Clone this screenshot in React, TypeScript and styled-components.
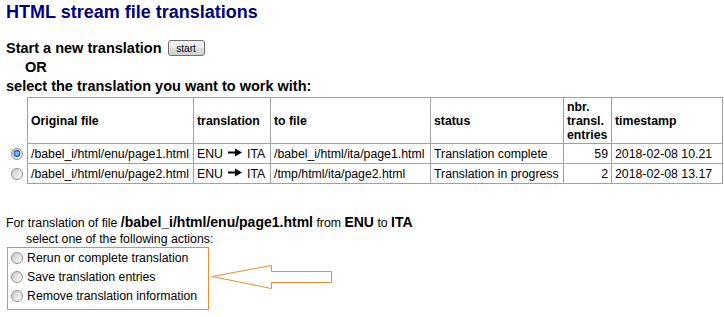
import styled, { createGlobalStyle } from 'styled-components'

const GlobalStyle = createGlobalStyle`
  * {
    box-sizing: border-box;
  }
  body {
    margin: 0;
    background: #ffffff;
    color: #000000;
    font-family: 'Liberation Sans', Arial, sans-serif;
  }
`

const Page = styled.div`
  padding: 1px 0 8px 6px;
  width: 724px;
`

const Title = styled.h1`
  margin: 0;
  font-size: 18px;
  line-height: 22px;
  font-weight: bold;
  color: #000080;
`

const Intro = styled.div`
  margin-top: 16px;
  font-size: 14.5px;
  line-height: 19px;
  font-weight: bold;
`

const Line = styled.div<{ indent?: number }>`
  padding-left: ${({ indent }) => indent || 0}px;
  white-space: nowrap;
`

const StartButton = styled.button`
  display: inline-block;
  vertical-align: text-top;
  width: 37px;
  height: 16px;
  margin-left: 2px;
  padding: 0;
  font-family: 'Liberation Sans', Arial, sans-serif;
  font-size: 10px;
  line-height: 13px;
  color: #000;
  border: 1px solid #707070;
  border-radius: 3px;
  background: linear-gradient(#f2f2f2 0%, #ebebeb 50%, #dddddd 51%, #cfcfcf 100%);
`

const Table = styled.table`
  margin-top: 1px;
  border-collapse: separate;
  border-spacing: 0;
  table-layout: fixed;
  width: 716px;
  font-size: 12.3px;
  line-height: 14px;
`

const Cell = styled.td<{ first?: boolean; align?: string }>`
  border-right: 1px solid #a0a0a0;
  border-bottom: 1px solid #a0a0a0;
  ${({ first }) => first && 'border-left: 1px solid #a0a0a0;'}
  padding: 0 3px;
  height: 20px;
  vertical-align: middle;
  text-align: ${({ align }) => align || 'left'};
  white-space: nowrap;
  overflow: hidden;
`

const HeadCell = styled(Cell).attrs({ as: 'th' })<{ w: number }>`
  width: ${({ w }) => w}px;
  height: 47px;
  border-top: 1px solid #a0a0a0;
  font-weight: bold;
`

const PickCell = styled.td<{ w?: number }>`
  width: ${({ w }) => w || 21}px;
  padding: 0;
  text-align: center;
  vertical-align: middle;
  line-height: 0;
`

const LangArrow = styled.svg`
  display: inline-block;
  width: 14px;
  height: 9px;
  margin: 0 5px;
  vertical-align: 1px;
`

const Radio = styled.input.attrs({ type: 'radio' })`
  appearance: none;
  -webkit-appearance: none;
  width: 12px;
  height: 12px;
  margin: 0;
  border: 1px solid #8f8f8f;
  border-radius: 50%;
  background: linear-gradient(135deg, #c9c9c9 0%, #e6e6e6 55%, #fbfbfb 100%);
  vertical-align: middle;

  &:checked {
    background:
      radial-gradient(circle at 50% 45%, #7fc0f0 0 1.5px, #2a6cc0 2.6px, #1b4f9a 3.2px, transparent 3.7px),
      linear-gradient(135deg, #c9c9c9 0%, #e6e6e6 55%, #fbfbfb 100%);
  }
`

const Info = styled.div`
  margin-top: 30px;
  font-size: 12.3px;
  line-height: 16px;
  white-space: nowrap;
`

const Strong = styled.b<{ size?: number }>`
  font-size: ${({ size }) => size || 14}px;
`

const ActionRow = styled.div`
  display: flex;
  align-items: flex-start;
`

const ActionBox = styled.div`
  width: 202px;
  margin-left: 1px;
  padding: 0 0 4px 0;
  border: 1px solid #f7862c;
`

const Action = styled.label`
  display: flex;
  align-items: center;
  gap: 4px;
  height: 19px;
  padding-left: 3px;
  font-size: 12.3px;
  white-space: nowrap;
`

const rows = [
  {
    from: '/babel_i/html/enu/page1.html',
    to: '/babel_i/html/ita/page1.html',
    status: 'Translation complete',
    count: 59,
    stamp: '2018-02-08 10.21',
    checked: true,
  },
  {
    from: '/babel_i/html/enu/page2.html',
    to: '/tmp/html/ita/page2.html',
    status: 'Translation in progress',
    count: 2,
    stamp: '2018-02-08 13.17',
    checked: false,
  },
]

const actions = ['Rerun or complete translation', 'Save translation entries', 'Remove translation information']

const RightArrow = () => (
  <LangArrow viewBox="0 0 14 9">
    <rect x="0" y="3.5" width="9" height="2" fill="#000" />
    <polygon points="7,0.5 14,4.5 7,8.5" fill="#000" />
  </LangArrow>
)

const PointerArrow = () => (
  <svg width="126" height="64" viewBox="0 0 126 64">
    <polygon
      points="3,29.5 62.5,18.5 62.5,24.5 122.5,24.5 122.5,35.5 62.5,35.5 62.5,41.5"
      fill="none"
      stroke="#f7862c"
      strokeWidth="1"
    />
  </svg>
)

export default function App() {
  return (
    <Page>
      <GlobalStyle />
      <Title>HTML stream file translations</Title>
      <Intro>
        <Line>
          Start a new translation <StartButton>start</StartButton>
        </Line>
        <Line indent={19}>OR</Line>
        <Line>select the translation you want to work with:</Line>
      </Intro>
      <Table>
        <thead>
          <tr>
            <PickCell w={21} />
            <HeadCell first w={167}>Original file</HeadCell>
            <HeadCell w={77}>translation</HeadCell>
            <HeadCell w={160}>to file</HeadCell>
            <HeadCell w={133}>status</HeadCell>
            <HeadCell w={48}>
              nbr.
              <br />
              transl.
              <br />
              entries
            </HeadCell>
            <HeadCell w={111}>timestamp</HeadCell>
          </tr>
        </thead>
        <tbody>
          {rows.map((r) => (
            <tr key={r.from}>
              <PickCell>
                <Radio name="pick" defaultChecked={r.checked} />
              </PickCell>
              <Cell first>{r.from}</Cell>
              <Cell>
                ENU
                <RightArrow />
                ITA
              </Cell>
              <Cell>{r.to}</Cell>
              <Cell>{r.status}</Cell>
              <Cell align="right">{r.count}</Cell>
              <Cell>{r.stamp}</Cell>
            </tr>
          ))}
        </tbody>
      </Table>
      <Info>
        <Line>
          For translation of file <Strong>/babel_i/html/enu/page1.html</Strong> from <Strong>ENU</Strong> to{' '}
          <Strong>ITA</Strong>
        </Line>
        <Line indent={20}>select one of the following actions:</Line>
      </Info>
      <ActionRow>
        <ActionBox>
          {actions.map((a) => (
            <Action key={a}>
              <Radio name="action" />
              {a}
            </Action>
          ))}
        </ActionBox>
        <PointerArrow />
      </ActionRow>
    </Page>
  )
}
